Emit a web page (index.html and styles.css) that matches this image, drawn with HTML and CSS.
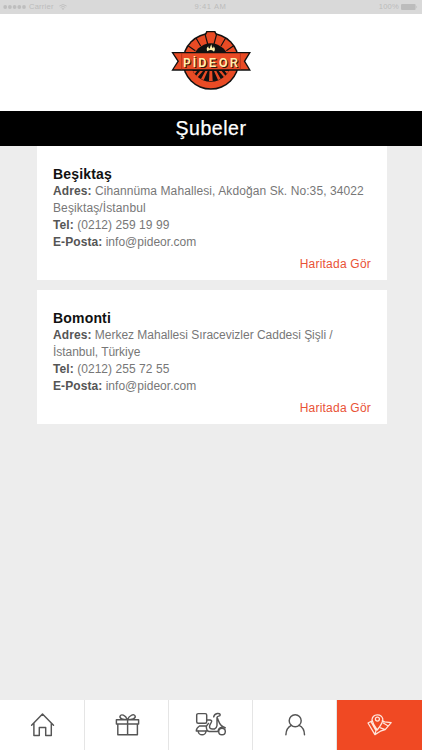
FILE: index.html
```
<!DOCTYPE html>
<html lang="tr">
<head>
<meta charset="utf-8">
<title>Pideor - Şubeler</title>
<link rel="stylesheet" href="styles.css">
</head>
<body>
<div class="app">
  <div class="status">
    <div class="status-left">
      <svg class="dots" viewBox="0 0 23 6"><g fill="#bebebe"><circle cx="2.2" cy="3" r="1.9"/><circle cx="6.9" cy="3" r="1.9"/><circle cx="11.6" cy="3" r="1.9"/><circle cx="16.3" cy="3" r="1.9"/><circle cx="21" cy="3" r="1.9"/></g></svg>
      <span class="carrier">Carrier</span>
      <svg class="wifi" viewBox="0 0 8 6"><path d="M.4 2Q4-1 7.6 2M1.7 3.4Q4 1.4 6.3 3.4M3.2 4.7L4 5.5L4.8 4.7Q4 4.1 3.2 4.7" fill="none" stroke="#bebebe" stroke-width=".9"/></svg>
    </div>
    <span class="clock">9:41 AM</span>
    <div class="status-right">
      <span class="percent">100%</span>
      <svg class="battery" viewBox="0 0 17 6"><rect width="14.6" height="6" rx="1" fill="#bcbcbc"/><path d="M15.3 1.6Q17 3 15.3 4.4Z" fill="#bcbcbc"/></svg>
    </div>
  </div>
  <header class="header">
    <svg class="logo" viewBox="0 0 306 228">
      <path d="M133 40L139 27H166L172 40V70H133Z" fill="#111"/>
      <circle cx="152.5" cy="118" r="85.5" fill="#111"/>
      <circle cx="152.5" cy="118" r="81" fill="#e94b25"/>
      <path d="M138 40L142 31H163L167 40L161 65H144Z" fill="#e94b25"/>
      <path d="M135 36L143 66M170 36L162 66M108 48L122 72M197 48L183 72M84 71L106 86M221 71L199 86" stroke="#111" stroke-width="3.5"/>
      <path d="M98.5 118A54 54 0 0 1 206.5 118Z" fill="#111"/>
      <path d="M91 118A61.5 61.5 0 0 0 214 118Z" fill="#111"/>
      <path d="M99 147H111L104 156ZM120 147H129L113 166L108 162ZM136 147H143L131 174L123 171ZM148.5 147H156.5L158 177H147ZM162 147H169L182 171L174 174ZM176 147H185L197 162L192 166ZM194 147H206L201 156Z" fill="#e94b25"/>
      <path d="M142 88C138 79 142 76 145 73Q144 78 149 80C151 77 150 72 155 67Q153 74 158 79Q161 78 161 73Q168 82 162 89Q158 84 153 84Q147 84 142 88Z" fill="#fff2b0"/>
      <path d="M34 90H273L256 118L273 146H34L52 118Z" fill="#111"/>
      <path d="M41 94H266L251 118L266 142H41L57 118Z" fill="#e94b25"/>
      <path d="M65 93V143M241 93V143" stroke="#9f2e18" stroke-width="2"/>
      <g class="wordmark" transform="scale(.8 1)"><text x="91" y="138" textLength="205" fill="#35170d">PİDEOR</text><text x="87" y="135" textLength="205" fill="#fff0ae">PİDEOR</text></g>
    </svg>
  </header>
  <h1 class="title">Şubeler</h1>
  <main class="branches">
    <article class="card">
      <h2>Beşiktaş</h2>
      <p class="adr1"><b>Adres:</b> Cihannüma Mahallesi, Akdoğan Sk. No:35, 34022</p>
      <p>Beşiktaş/İstanbul</p>
      <p class="tel"><b>Tel:</b> (0212) 259 19 99</p>
      <p class="mail"><b>E-Posta:</b> info@pideor.com</p>
      <a class="map-link">Haritada Gör</a>
    </article>
    <article class="card">
      <h2>Bomonti</h2>
      <p class="adr2"><b>Adres:</b> Merkez Mahallesi Sıracevizler Caddesi Şişli /</p>
      <p class="city">İstanbul, Türkiye</p>
      <p class="tel"><b>Tel:</b> (0212) 255 72 55</p>
      <p class="mail"><b>E-Posta:</b> info@pideor.com</p>
      <a class="map-link">Haritada Gör</a>
    </article>
  </main>
  <nav class="tabs">
    <a class="tab"><svg viewBox="0 0 32 26"><path d="M5.6 13.2L16.5 2L27.5 13.2M7.9 11.2V23.5H13.3V15.5H19.7V23.5H25.3V11.2"/></svg></a>
    <a class="tab"><svg viewBox="0 0 32 26"><path d="M5.4 7.8H27.6V12H5.4ZM6.8 12H26.4V22.8H6.8ZM16.6 7.8V22.8M16.3 7.8C12 7.6 8.4 6.8 9 4.2C10 1.8 14.5 2.7 16.3 7.8C18.5 2.7 23.3 1.5 24.2 4.2C24.8 6.8 20.8 7.6 16.3 7.8Z"/></svg></a>
    <a class="tab"><svg viewBox="0 0 32 26"><rect x="1.7" y="1.6" width="10" height="9.6" rx="1.5"/><path d="M12.3 8H15.2Q17.5 8.3 16.2 10.5L14.8 13.2Q13.7 16.8 17 17H19.5Q21.7 16 22 13.5V5.5M18.7 4.9C19.5 .9 25.3 .7 25.2 3C25 4.9 22.2 3.3 22 5.6C24.2 8.8 23.4 14 30.2 15.7M4.5 14H11.5L13.5 11.4M4.5 14Q1.3 15.9 1.3 19H12M11.3 14Q11.2 19 14 19.5H23Q23.4 15.5 27.2 15.2"/><path d="M3.3 19.2A3.8 3.6 0 0 0 10.9 19.2"/><circle cx="27" cy="19.5" r="3.3"/></svg></a>
    <a class="tab"><svg viewBox="0 0 32 26"><circle cx="16.2" cy="8.8" r="6"/><path d="M6.9 22.7C7.1 18.3 9.2 14.8 12.4 13.3M20 13.3C23.4 14.8 25.4 18.3 25.5 22.7"/></svg></a>
    <a class="tab active"><svg viewBox="0 0 32 26"><path d="M8.2 8.8L4 11L10.9 22.6L16.4 19.2L21.2 17.6L27.2 10.6L20.5 9.9L18.3 8.5M10.9 22.6L12 18.6L7 9.8M16.5 15.8L21.2 17.6M19.3 11L24.2 14M13.2 18Q19.1 10.8 18.8 7A5.5 5.5 0 0 0 8 7.6Q9 12.5 13.2 18Z"/><circle cx="13.4" cy="7.1" r="2"/></svg></a>
  </nav>
</div>
</body>
</html>
```
FILE: styles.css
```
* { box-sizing: border-box; }
body { margin: 0; font-family: "Liberation Sans", Arial, sans-serif; background: #ededed; }
.app { width: 422px; height: 750px; display: flex; flex-direction: column; overflow: hidden; }
.status { height: 14px; flex: none; background: #d9d9d9; color: #bcbcbc; font-size: 7.6px; line-height: 14px; display: grid; grid-template-columns: 1fr auto 1fr; align-items: center; padding: 0 4px 0 3px; }
.status-left, .status-right { display: flex; align-items: center; }
.status-right { justify-content: flex-end; gap: 2px; }
.dots { width: 23px; height: 6px; }
.carrier { margin-left: 3px; letter-spacing: .2px; }
.wifi { width: 8px; height: 6px; margin-left: 5px; }
.clock { letter-spacing: .6px; }
.percent { letter-spacing: .2px; }
.battery { width: 17px; height: 6px; }
.header { height: 97px; flex: none; background: #fff; display: flex; justify-content: center; padding-top: 8px; }
.logo { width: 102px; height: 76px; }
.wordmark { font: bold 41px "Liberation Sans", Arial, sans-serif; }
.title { height: 35px; flex: none; margin: 0; background: #000; color: #fff; text-align: center; font-size: 19.5px; font-weight: normal; line-height: 35px; letter-spacing: .55px; -webkit-text-stroke: .25px #fff; }
.branches { flex: 1; display: flex; flex-direction: column; gap: 10px; padding: 0 35px 0 37px; }
.card { background: #fff; height: 133.5px; flex: none; padding: 20px 16px 0; display: flex; flex-direction: column; }
.card + .card { margin-top: .5px; }
h2 { margin: 0; font-size: 14px; line-height: 17px; color: #111; letter-spacing: .18px; }
p { margin: 0; font-size: 12px; line-height: 16.9px; color: #777; white-space: nowrap; letter-spacing: .12px; }
p b { color: #555; letter-spacing: .08px; }
.adr1 { letter-spacing: .09px; }
.adr2 { letter-spacing: -.02px; }
.city { letter-spacing: -.03px; }
.tel { letter-spacing: .05px; }
.mail { letter-spacing: .02px; }
.map-link { align-self: flex-end; margin-top: 5px; font-size: 12px; line-height: 17px; color: #e95236; letter-spacing: .22px; }
.tabs { height: 50px; flex: none; display: grid; grid-template-columns: 85px 84px 84px 84px 85px; background: #fff; }
.tab { display: flex; justify-content: center; padding-top: 12px; border-right: 1px solid #e5e5e5; }
.tab svg { width: 32px; height: 26px; fill: none; stroke: #555; stroke-width: 1.45; stroke-linejoin: round; stroke-linecap: round; }
.tab.active { background: #f04923; border: 0; }
.tab.active svg { stroke: #ffe5dc; stroke-width: 1.25; }
```
